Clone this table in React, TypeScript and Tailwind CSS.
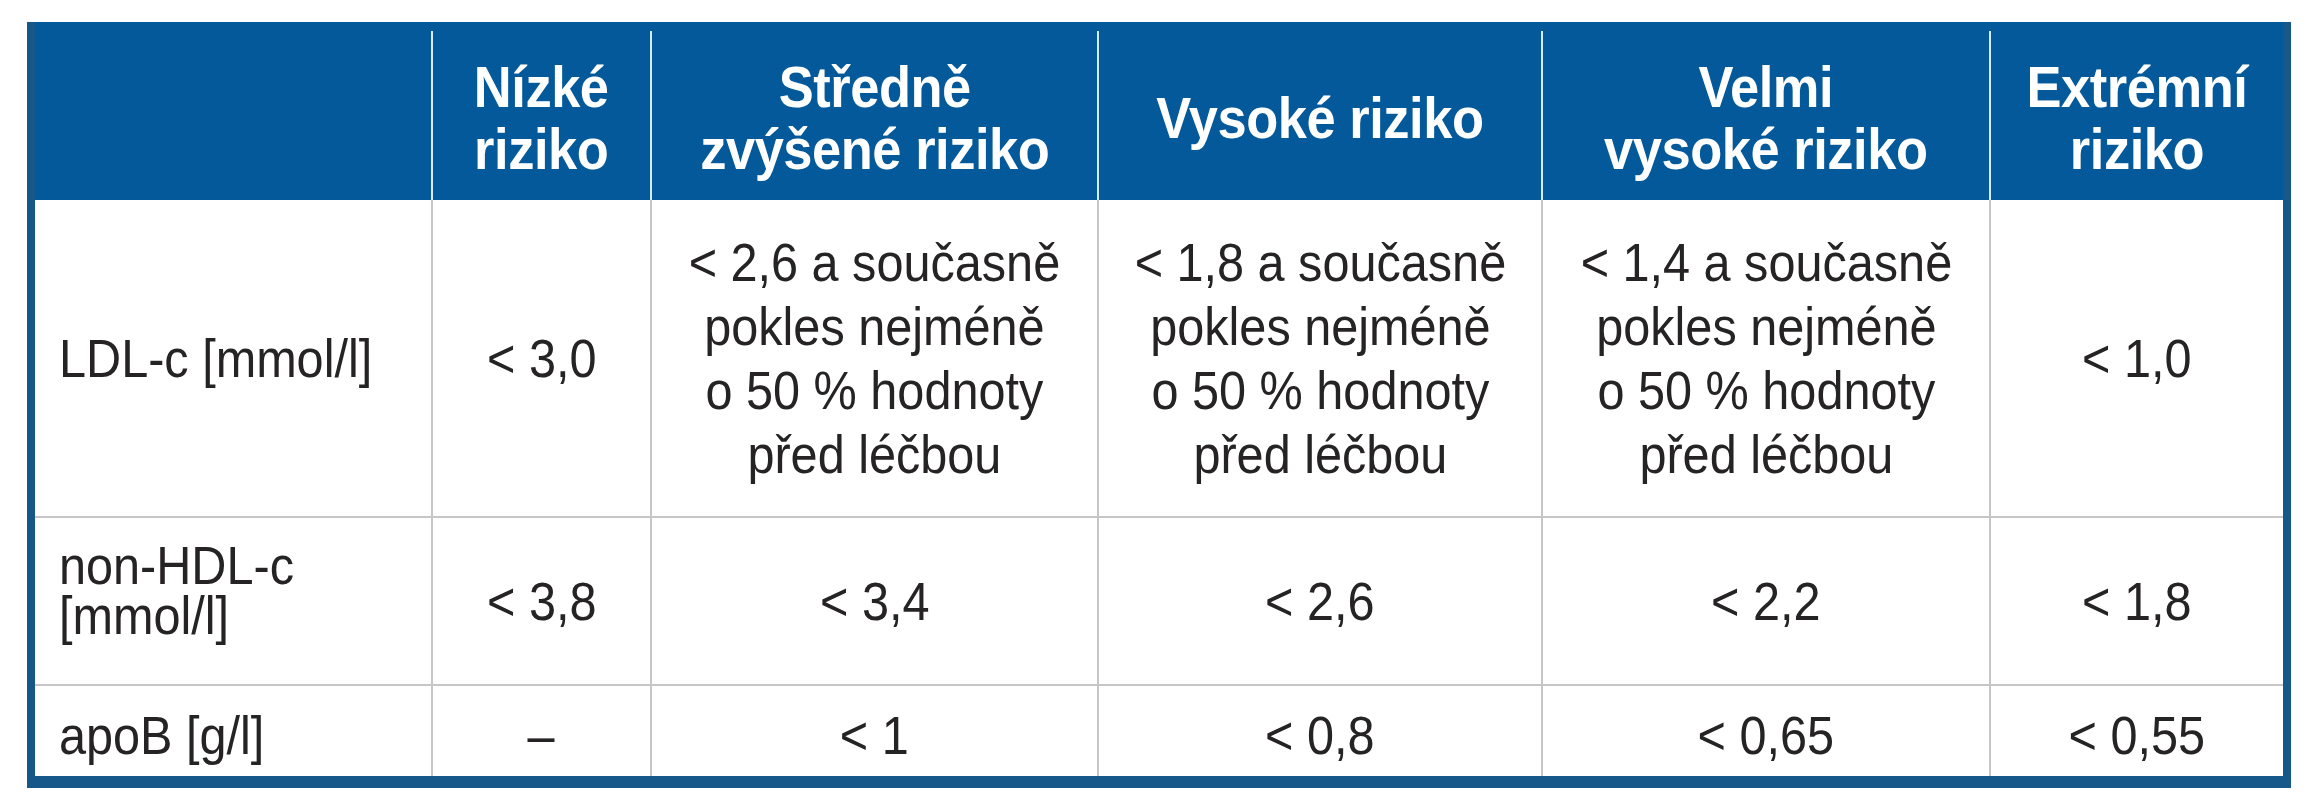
import React from "react";

const font = { fontFamily: '"Liberation Sans", Arial, sans-serif' };

const headers = [
    "",
    "Nízké\nriziko",
    "Středně\nzvýšené riziko",
    "Vysoké riziko",
    "Velmi\nvysoké riziko",
    "Extrémní\nriziko",
];

const target = "< 2,6 a současně\npokles nejméně\no 50 % hodnoty\npřed léčbou";

const rows = [
    {
        h: "h-[316px]",
        pad: "",
        cells: [
            "LDL-c [mmol/l]",
            "< 3,0",
            target,
            target.replace("2,6", "1,8"),
            target.replace("2,6", "1,4"),
            "< 1,0",
        ],
    },
    {
        h: "h-[168px]",
        pad: "",
        cells: ["non-HDL-c\n[mmol/l]", "< 3,8", "< 3,4", "< 2,6", "< 2,2", "< 1,8"],
    },
    {
        h: "h-[92px]",
        pad: "pt-[8px]",
        cells: ["apoB [g/l]", "–", "< 1", "< 0,8", "< 0,65", "< 0,55"],
    },
];

const grid = "grid grid-cols-[396px_219px_447px_444px_448px_294px]";

export default function App() {
    return (
        <div className="min-h-[800px] w-[2319px] bg-white pt-[22px] pl-[27px]" style={font}>
            <div className="w-[2264px] border-x-[8px] border-b-[12px] border-[#16588a]">
                {/* header */}
                <div className={`${grid} h-[178px] bg-[#03599a]`}>
                    {headers.map((t, i) => (
                        <div key={i} className="flex flex-col pt-[9px]">
                            <div
                                className={`flex flex-1 items-center justify-center pt-[4px] ${
                                    i > 0 ? "border-l-2 border-[#d3eef9]" : ""
                                }`}
                            >
                                <span className="inline-block scale-x-[0.92] whitespace-pre-line text-center text-[57px] font-bold leading-[62px] tracking-[-0.5px] text-white">
                                    {t}
                                </span>
                            </div>
                        </div>
                    ))}
                </div>
                {/* body */}
                {rows.map((r, ri) => (
                    <div key={ri} className={`${grid} ${r.h}`}>
                        {r.cells.map((c, ci) => (
                            <div
                                key={ci}
                                className={`flex items-center ${r.pad} ${
                                    ci === 0 ? "justify-start pl-[24px]" : "justify-center border-l-2 border-[#c6c6c6]"
                                } ${ri > 0 ? "border-t-2 border-t-[#c6c6c6]" : ""} ${
                                    ci === 0 && ri === 1 ? "pb-[22px]" : ""
                                }`}
                            >
                                <span
                                    className={`inline-block scale-x-[0.9] whitespace-pre-line text-[54px] text-[#262324] ${
                                        ci === 0 ? "origin-left text-left" : "text-center"
                                    } ${ci === 0 && ri === 1 ? "leading-[50px]" : "leading-[64px]"}`}
                                >
                                    {c}
                                </span>
                            </div>
                        ))}
                    </div>
                ))}
            </div>
        </div>
    );
}
